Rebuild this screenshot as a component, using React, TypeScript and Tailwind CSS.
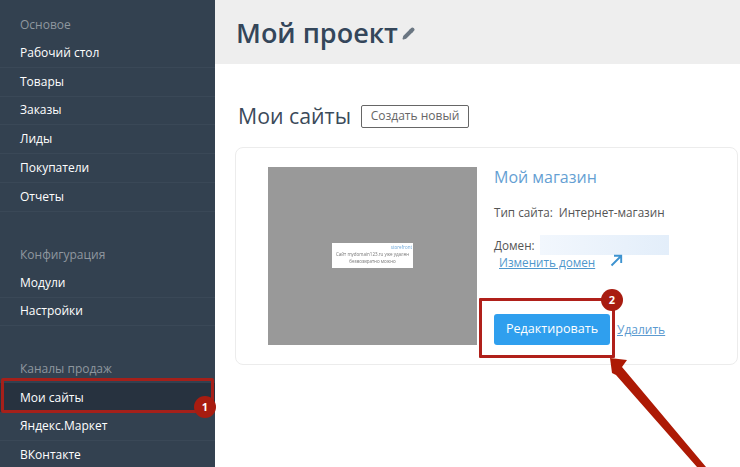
import { Pencil } from "lucide-react"

interface Group {
  title: string
  items: string[]
}

const groups: Group[] = [
  {
    title: "Основое",
    items: ["Рабочий стол", "Товары", "Заказы", "Лиды", "Покупатели", "Отчеты"],
  },
  { title: "Конфигурация", items: ["Модули", "Настройки"] },
  { title: "Каналы продаж", items: ["Мои сайты", "Яндекс.Маркет", "ВКонтакте"] },
]

const Sidebar = () => (
  <aside className="flex h-full w-[215px] shrink-0 flex-col gap-[29px] overflow-hidden bg-[#334150] pt-[11px]">
    {groups.map(group => (
      <div key={group.title}>
        <div className="flex h-[28px] items-center pl-5 text-[12px] text-[#8f979f]">
          {group.title}
        </div>
        {group.items.map(item => (
          <div
            key={item}
            className={
              item === "Мои сайты"
                ? "flex h-[28.8px] shrink-0 items-center bg-[#27323f] pl-5 text-[12px] text-white"
                : "flex h-[28.8px] shrink-0 items-center border-b border-[#3a4857] pl-5 text-[12px] text-white"
            }
          >
            {item}
          </div>
        ))}
      </div>
    ))}
  </aside>
)

const SiteCard = () => (
  <div className="mr-[2px] ml-[20px] mt-[18px] flex h-[218px] rounded-lg border border-[#ececec] pt-[19px] pl-[32px]">
    <div className="flex h-[178px] w-[209px] shrink-0 items-center justify-center bg-[#999999]">
      <div className="mt-[-1px] flex h-[25px] w-[81px] flex-col items-center whitespace-nowrap bg-white pt-[1px] text-[4.5px] leading-[7px] text-[#777777] blur-[0.4px]">
        <span className="self-end pr-[1px] text-[#6ca6d8]">storefront</span>
        <span>Сайт mydomain123.ru уже удален</span>
        <span>безвозвратно можно</span>
      </div>
    </div>
    <div className="ml-[17px] flex flex-col">
      <a className="mt-[-1px] text-[16px] leading-[22px] text-[#659fd3]">Мой магазин</a>
      <div className="mt-[15px] whitespace-pre text-[11.7px] leading-[18px] text-[#555555]">
        Тип сайта:  Интернет-магазин
      </div>
      <div className="mt-[14px] flex h-[20px] items-center text-[11.7px] text-[#555555]">
        <span className="w-[46px] pt-[2px]">Домен:</span>
        <div className="h-[20px] w-[129px] bg-gradient-to-r from-[#f2f7fd] to-[#e3eefa]" />
      </div>
      <div className="ml-[5px] flex h-[15px] items-center text-[11.7px] text-[#4f97cc]">
        <a className="underline">Изменить домен</a>
        <svg className="mt-[-4px] ml-[15px]" width="13" height="13" viewBox="0 0 13 13" fill="none">
          <path d="M1.5 11.5 L11 2 M4 1.8 H11.2 V9" stroke="#3d93d0" strokeWidth="1.9" />
        </svg>
      </div>
      <div className="mt-[44px] flex items-center">
        <button className="h-[31px] w-[116px] rounded-[3px] bg-[#2f9fee] text-[12.6px] text-white">
          Редактировать
        </button>
        <a className="ml-[7px] text-[12px] text-[#5b9ad0] underline">Удалить</a>
      </div>
    </div>
  </div>
)

const Badge = ({ n, className }: { n: number; className: string }) => (
  <div
    className={
      "absolute flex h-[22px] w-[22px] items-center justify-center rounded-full bg-[#a81c10] text-[11px] font-bold text-white " +
      className
    }
  >
    {n}
  </div>
)

const App = () => (
  <div className="relative flex h-[467px] w-[740px] overflow-hidden bg-white font-['Open_Sans',sans-serif]">
    <Sidebar />
    <main className="min-w-0 flex-1">
      <header className="flex h-[64px] items-center bg-[#eeeeee] pl-[21px]">
        <h1 className="text-[27px] font-semibold leading-none text-[#34465a]">Мой проект</h1>
        <Pencil className="mt-[3px] ml-[4px] h-[13px] w-[13px] fill-[#6a7682] text-[#6a7682]" />
      </header>
      <div className="mt-[39px] flex items-center pl-[23px]">
        <h2 className="text-[21.3px] leading-[26px] text-[#3b4a5a]">Мои сайты</h2>
        <button className="ml-[10px] h-[23px] w-[108px] rounded-[2px] border border-[#666666] text-[12px] text-[#666666]">
          Создать новый
        </button>
      </div>
      <SiteCard />
    </main>

    {/* annotations on top of the screenshot */}
    <div className="absolute top-[378px] left-[1px] h-[35px] w-[213px] rounded-[2px] border-[3px] border-[#a5201a]" />
    <Badge n={1} className="top-[396px] left-[194px]" />
    <div className="absolute top-[298px] left-[479px] h-[60px] w-[136px] rounded-[1px] border-[3px] border-[#b0201a]" />
    <Badge n={2} className="top-[289px] left-[601px]" />
    <svg className="absolute top-0 left-0" width="740" height="467" viewBox="0 0 740 467" fill="none">
      <polygon points="610,358 627,360 622,367 706,467 697,467 616,375 612,373" fill="#ad1a05" />
    </svg>
  </div>
)

export default App
